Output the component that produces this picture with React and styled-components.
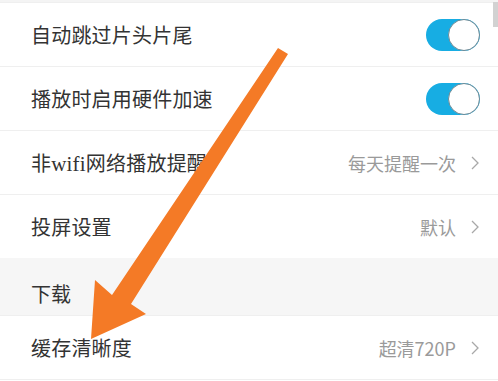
import React from "react";
import styled, { createGlobalStyle } from "styled-components";

const GlobalStyle = createGlobalStyle`
  html, body {
    margin: 0;
    padding: 0;
    background: #ffffff;
  }
  body {
    font-family: "Noto Sans CJK SC", "Noto Sans", sans-serif;
    overflow: hidden;
  }
`;

const Page = styled.div`
  position: relative;
  width: 498px;
  height: 381px;
  overflow: hidden;
  background: #ffffff;
  border-top: 2px solid #f4f4f4;
  box-sizing: border-box;
`;

const List = styled.div`
  display: flex;
  flex-direction: column;
`;

const Row = styled.div`
  height: 63px;
  display: flex;
  align-items: center;
  justify-content: space-between;
  padding: 0 18px 0 31px;
  border-top: 1px solid #efefef;
  &:last-child {
    border-bottom: 1px solid #efefef;
  }
`;

const Section = styled.div`
  height: 57px;
  background: #f6f6f6;
  display: flex;
  align-items: flex-end;
  padding: 0 31px 9px;
  box-sizing: border-box;
  font-size: 20px;
  line-height: 24px;
  color: #333333;
`;

const Label = styled.span`
  font-size: 20px;
  color: #333333;
  letter-spacing: 0.2px;
`;

const Latin = styled.span`
  font-family: "Liberation Serif", serif;
  font-size: 21px;
`;

const Value = styled.div`
  display: flex;
  align-items: center;
  gap: 15px;
  font-size: 18px;
  color: #9a9a9a;
  margin-right: 1px;
`;

const Toggle = styled.div`
  width: 54px;
  height: 32px;
  border-radius: 16px;
  background: #17ade3;
  position: relative;
  &::after {
    content: "";
    position: absolute;
    right: 0;
    top: 0;
    width: 30px;
    height: 30px;
    border-radius: 50%;
    background: #ffffff;
    border: 1px solid #6d8a96;
  }
`;

const Scrollbar = styled.div`
  position: absolute;
  top: 0;
  right: 0;
  width: 5px;
  height: 25px;
  background: #d2d2d2;
`;

const ArrowLayer = styled.svg`
  position: absolute;
  left: 0;
  top: 0;
  pointer-events: none;
`;

const Chevron = () => (
  <svg width="8" height="14" viewBox="0 0 8 14">
    <path d="M1 1 L7 7 L1 13" fill="none" stroke="#a8a8a8" strokeWidth="1.3" />
  </svg>
);

const ToggleRow = ({ label }) => (
  <Row>
    <Label>{label}</Label>
    <Toggle />
  </Row>
);

const LinkRow = ({ label, value }) => (
  <Row>
    <Label>{label}</Label>
    <Value>
      {value}
      <Chevron />
    </Value>
  </Row>
);

export default function App() {
  return (
    <>
      <GlobalStyle />
      <Page>
        <List>
          <ToggleRow label="自动跳过片头片尾" />
          <ToggleRow label="播放时启用硬件加速" />
          <LinkRow
            label={
              <>
                非<Latin>wifi</Latin>网络播放提醒
              </>
            }
            value="每天提醒一次"
          />
          <LinkRow label="投屏设置" value="默认" />
          <Section>下载</Section>
          <LinkRow label="缓存清晰度" value="超清720P" />
        </List>
        <Scrollbar />
        <ArrowLayer width="498" height="381" viewBox="0 0 498 381">
          <polygon
            points="278,46 288,52 131,302 146,312 91,337 95,278 112,293"
            fill="#f47a26"
          />
        </ArrowLayer>
      </Page>
    </>
  );
}
